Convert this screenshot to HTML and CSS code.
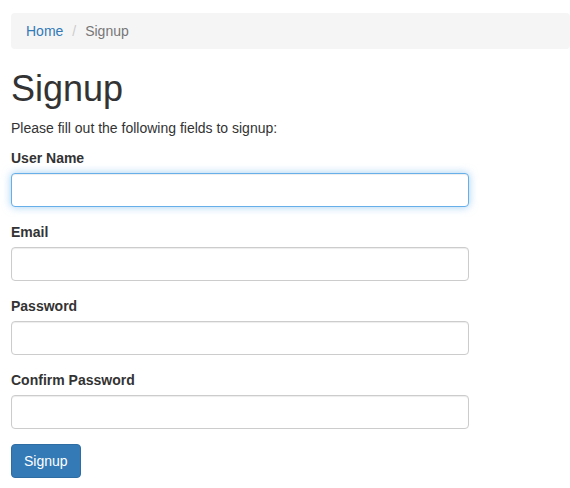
FILE: index.html
```html
<!DOCTYPE html>
<html lang="en">
<head>
<meta charset="utf-8">
<title>Signup</title>
<link rel="stylesheet" href="styles.css">
</head>
<body>
<div class="container">
  <ol class="breadcrumb">
    <li><a href="#">Home</a></li>
    <li class="active">Signup</li>
  </ol>
  <div class="site-signup">
    <h1>Signup</h1>
    <p>Please fill out the following fields to signup:</p>
    <form class="signup-form">
      <div class="form-group">
        <label class="control-label" for="username">User Name</label>
        <input type="text" id="username" class="form-control focused">
      </div>
      <div class="form-group">
        <label class="control-label" for="email">Email</label>
        <input type="text" id="email" class="form-control">
      </div>
      <div class="form-group">
        <label class="control-label" for="password">Password</label>
        <input type="password" id="password" class="form-control">
      </div>
      <div class="form-group">
        <label class="control-label" for="confirm">Confirm Password</label>
        <input type="password" id="confirm" class="form-control">
      </div>
      <div class="form-group">
        <button type="button" class="btn btn-primary">Signup</button>
      </div>
    </form>
  </div>
</div>
</body>
</html>
```
FILE: styles.css
```css
* { box-sizing: border-box; }
html, body { margin: 0; padding: 0; }
body {
  font-family: "Liberation Sans", Arial, sans-serif;
  font-size: 14px;
  line-height: 20px;
  color: #333;
  background: #fff;
}
.container {
  padding: 13px 0 0 11px;
}
.breadcrumb {
  list-style: none;
  margin: 0 0 20px;
  padding: 8px 15px;
  background: #f5f5f5;
  border-radius: 4px;
  display: flex;
}
.breadcrumb li + li {
  margin-left: 4px;
}
.breadcrumb li + li::before {
  content: "/\00a0";
  padding: 0 5px;
  color: #ccc;
}
.breadcrumb a { color: #337ab7; text-decoration: none; }
.breadcrumb .active { color: #777; }
h1 {
  font-size: 36px;
  font-weight: 500;
  line-height: 39px;
  margin: 20px 0 10px;
}
p { margin: 0 0 10px; }
.signup-form { width: 458px; }
.form-group { margin-bottom: 15px; }
.control-label {
  display: inline-block;
  margin-bottom: 5px;
  font-weight: bold;
}
.form-control {
  display: block;
  width: 100%;
  height: 34px;
  padding: 6px 12px;
  font: inherit;
  color: #555;
  background: #fff;
  border: 1px solid #ccc;
  border-radius: 4px;
  box-shadow: inset 0 1px 1px rgba(0,0,0,.075);
  outline: 0;
}
.form-control.focused {
  border-color: #66afe9;
  box-shadow: inset 0 1px 1px rgba(0,0,0,.075), 0 0 8px rgba(102,175,233,.6);
}
.btn {
  display: inline-block;
  padding: 6px 12px;
  font: inherit;
  line-height: 20px;
  border: 1px solid transparent;
  border-radius: 4px;
  cursor: pointer;
}
.btn-primary {
  color: #fff;
  background: #337ab7;
  border-color: #2e6da4;
}
```
